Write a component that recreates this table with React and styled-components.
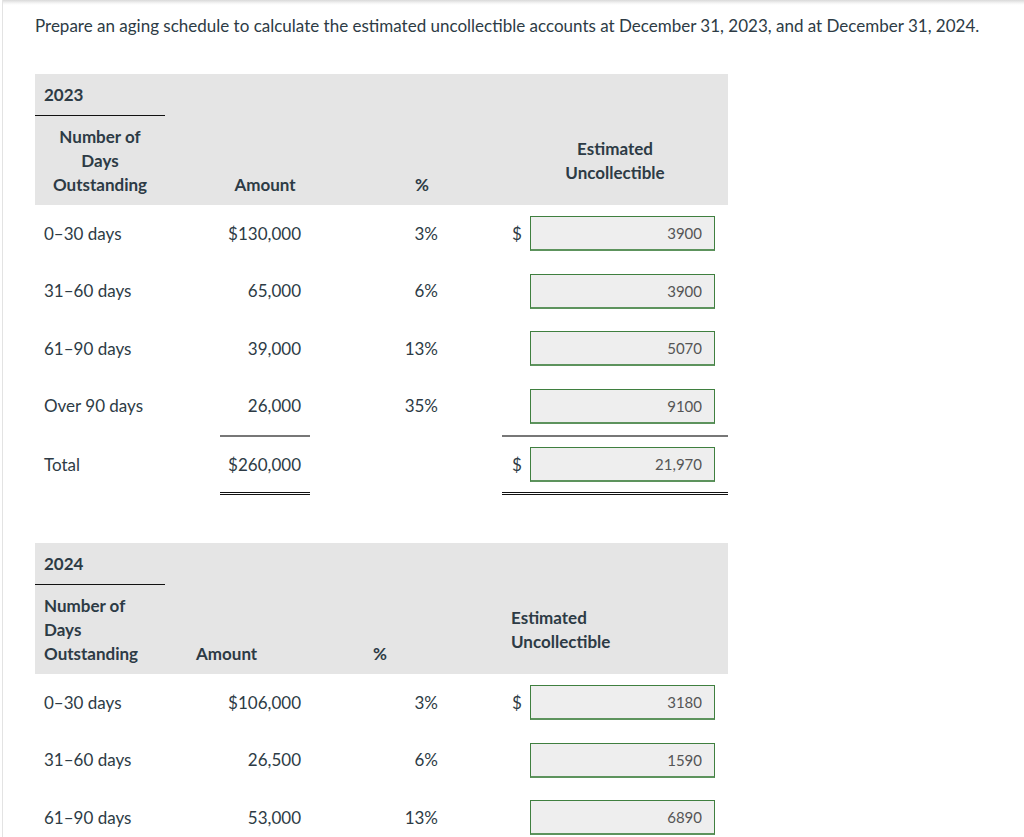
import React from "react";
import styled, { createGlobalStyle, css } from "styled-components";

const Global = createGlobalStyle`
  html, body { margin: 0; padding: 0; background: #fff; }
  body { font-family: Lato, "Open Sans", sans-serif; color: #2d3b45; }
`;

const Page = styled.div`
  position: relative;
  min-height: 837px;
  border-left: 1px solid #e3e3e3;
  margin-left: 2px;
  box-sizing: border-box;
`;

const TopShade = styled.div`
  height: 5px;
  background: linear-gradient(#d9d9d9, #f4f4f4 60%, #fff);
`;

const Content = styled.div`
  padding: 9px 0 0 32px;
`;

const Prompt = styled.p`
  margin: 0;
  font-size: 17px;
  line-height: 24px;
  color: #2d3b45;
`;

const COLS = "130px 55px 90px 87px 50px 55px 28px 198px";

const Schedule = styled.div`
  width: 693px;
  margin-top: ${(p) => p.$top}px;
`;

const Band = styled.div`
  background: #e5e5e5;
`;

const YearRow = styled.div`
  display: grid;
  grid-template-columns: 130px 1fr;
`;

const Year = styled.div`
  font-weight: 700;
  font-size: 17px;
  line-height: 24px;
  padding: 9px 9px 8px;
  border-bottom: 1px solid #111;
`;

const HeadRow = styled.div`
  display: grid;
  grid-template-columns: ${(p) => p.$cols};
  height: 89px;
  box-sizing: border-box;
  padding: 9px 0 8px;
`;

const HeadCell = styled.div`
  font-weight: 700;
  font-size: 17px;
  line-height: 24px;
  white-space: nowrap;
  text-align: ${(p) => p.$align || "center"};
  padding-left: ${(p) => (p.$align === "left" ? "9px" : "0")};
  align-self: ${(p) => p.$v || "end"};
  grid-column: ${(p) => p.$col};
`;

const Row = styled.div`
  display: grid;
  grid-template-columns: ${COLS};
  height: ${(p) => p.$h || 57.5}px;
  align-items: center;
  font-size: 17px;
  line-height: 24px;
`;

const Label = styled.div`
  grid-column: 1;
  padding-left: 9px;
  white-space: nowrap;
`;

const Num = styled.div`
  grid-column: ${(p) => p.$col};
  text-align: right;
  padding-right: 9px;
`;

const Dollar = styled.div`
  grid-column: 7;
  padding-left: 10px;
`;

const InputCell = styled.div`
  grid-column: 8;
`;

const Field = styled.input`
  display: block;
  width: 185px;
  height: 35px;
  box-sizing: border-box;
  border: 1px solid #3f7f3f;
  border-bottom: 2px solid #5d935d;
  border-radius: 0;
  background: #eeeeee;
  font-family: Lato, "Open Sans", sans-serif;
  font-size: 15px;
  color: #555;
  text-align: right;
  padding: 0 12px 0 4px;
  outline: none;
`;

const RuleRow = styled.div`
  display: grid;
  grid-template-columns: ${COLS};
`;

const Rule = styled.div`
  grid-column: ${(p) => p.$col};
  ${(p) =>
    p.$double
      ? css`
          border-top: 3px double #111;
        `
      : css`
          border-top: 2px solid #777;
        `}
`;

const rows2023 = [
  ["0–30 days", "$130,000", "3%", true, "3900"],
  ["31–60 days", "65,000", "6%", false, "3900"],
  ["61–90 days", "39,000", "13%", false, "5070"],
  ["Over 90 days", "26,000", "35%", false, "9100"],
];

const rows2024 = [
  ["0–30 days", "$106,000", "3%", true, "3180"],
  ["31–60 days", "26,500", "6%", false, "1590"],
  ["61–90 days", "53,000", "13%", false, "6890"],
];

function DataRow({ r }) {
  return (
    <Row>
      <Label>{r[0]}</Label>
      <Num $col={3}>{r[1]}</Num>
      <Num $col={5}>{r[2]}</Num>
      {r[3] && <Dollar>$</Dollar>}
      <InputCell>
        <Field readOnly value={r[4]} />
      </InputCell>
    </Row>
  );
}

export default function App() {
  return (
    <>
      <Global />
      <Page>
        <TopShade />
        <Content>
          <Prompt>
            Prepare an aging schedule to calculate the estimated uncollectible accounts at December 31, 2023, and at December 31, 2024.
          </Prompt>

          <Schedule $top={36}>
            <Band>
              <YearRow>
                <Year>2023</Year>
              </YearRow>
              <HeadRow $cols={COLS}>
                <HeadCell $col="1" $v="start">
                  Number of
                  <br />
                  Days
                  <br />
                  Outstanding
                </HeadCell>
                <HeadCell $col="3">Amount</HeadCell>
                <HeadCell $col="5">%</HeadCell>
                <HeadCell $col="7 / span 2" $v="center">
                  Estimated
                  <br />
                  Uncollectible
                </HeadCell>
              </HeadRow>
            </Band>
            {rows2023.map((r) => (
              <DataRow key={r[0]} r={r} />
            ))}
            <RuleRow>
              <Rule $col="3" />
              <Rule $col="7 / span 2" />
            </RuleRow>
            <Row $h={55}>
              <Label>Total</Label>
              <Num $col={3}>$260,000</Num>
              <Dollar>$</Dollar>
              <InputCell>
                <Field readOnly value="21,970" />
              </InputCell>
            </Row>
            <RuleRow>
              <Rule $col="3" $double />
              <Rule $col="7 / span 2" $double />
            </RuleRow>
          </Schedule>

          <Schedule $top={48}>
            <Band>
              <YearRow>
                <Year>2024</Year>
              </YearRow>
              <HeadRow $cols="152px 177px 138px 226px">
                <HeadCell $col="1" $align="left" $v="start">
                  Number of
                  <br />
                  Days
                  <br />
                  Outstanding
                </HeadCell>
                <HeadCell $col="2" $align="left">Amount</HeadCell>
                <HeadCell $col="3" $align="left">%</HeadCell>
                <HeadCell $col="4" $align="left" $v="center">
                  Estimated
                  <br />
                  Uncollectible
                </HeadCell>
              </HeadRow>
            </Band>
            {rows2024.map((r) => (
              <DataRow key={r[0]} r={r} />
            ))}
          </Schedule>
        </Content>
      </Page>
    </>
  );
}
